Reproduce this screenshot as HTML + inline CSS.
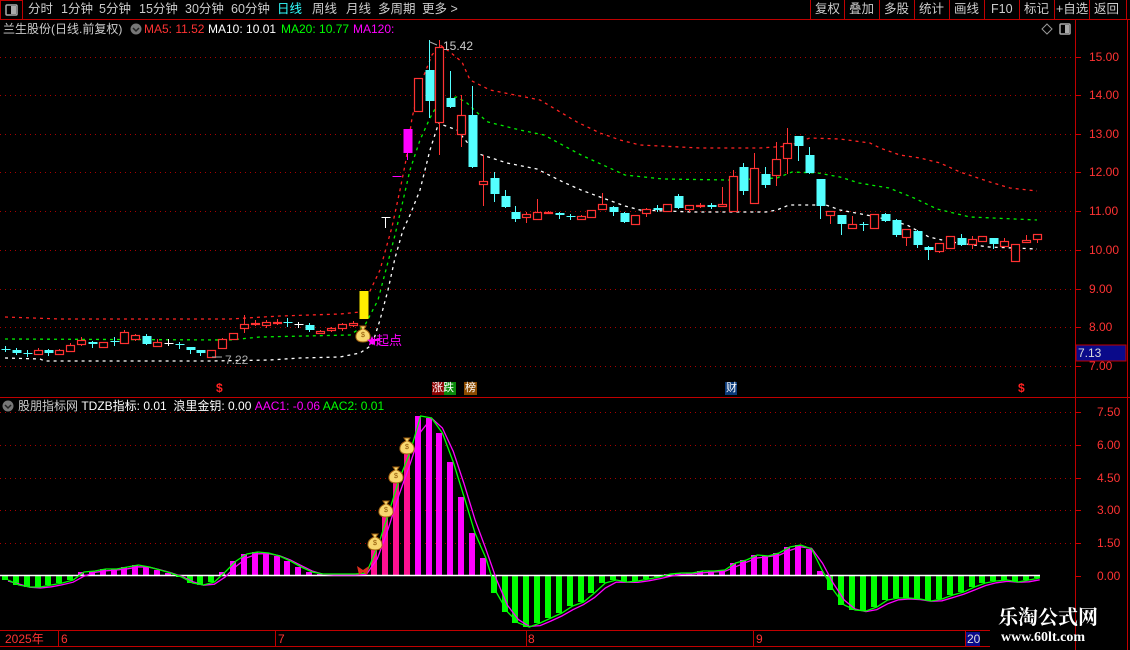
<!DOCTYPE html>
<html><head><meta charset="utf-8">
<style>
html,body{margin:0;padding:0;background:#000;width:1130px;height:650px;overflow:hidden}
body{position:relative;font-family:"Liberation Sans","Noto Sans CJK SC",sans-serif;}
.t{position:absolute;white-space:nowrap;font-size:12px;line-height:14px}
svg{position:absolute;left:0;top:0}
</style></head><body>
<svg id="s" width="1130" height="650" xmlns="http://www.w3.org/2000/svg">
<g stroke="#c00000" stroke-width="1" fill="none">
<line x1="0" y1="19.5" x2="1130" y2="19.5"/>
<line x1="0" y1="397.5" x2="1130" y2="397.5"/>
<line x1="1075.5" y1="20" x2="1075.5" y2="650"/>
<line x1="1127.5" y1="20" x2="1127.5" y2="650"/>
<line x1="0" y1="630.5" x2="990" y2="630.5"/>
<line x1="0" y1="646.5" x2="990" y2="646.5"/>
<rect x="0.5" y="0.5" width="22" height="19"/>
<line x1="810.5" y1="0" x2="810.5" y2="19"/><line x1="844.5" y1="0" x2="844.5" y2="19"/>
<line x1="879.5" y1="0" x2="879.5" y2="19"/><line x1="914.5" y1="0" x2="914.5" y2="19"/>
<line x1="949.5" y1="0" x2="949.5" y2="19"/><line x1="984.5" y1="0" x2="984.5" y2="19"/>
<line x1="1019.5" y1="0" x2="1019.5" y2="19"/><line x1="1054.5" y1="0" x2="1054.5" y2="19"/>
<line x1="1089.5" y1="0" x2="1089.5" y2="19"/><line x1="1126.5" y1="0" x2="1126.5" y2="19"/>
<line x1="58.5" y1="631" x2="58.5" y2="646"/><line x1="275.5" y1="631" x2="275.5" y2="646"/>
<line x1="526.5" y1="631" x2="526.5" y2="646"/><line x1="753.5" y1="631" x2="753.5" y2="646"/>
<line x1="965.5" y1="631" x2="965.5" y2="646"/>
</g>
<rect x="6" y="5" width="11" height="10" fill="none" stroke="#aaa" stroke-width="1.5" rx="1"/>
<rect x="11" y="6" width="5" height="8" fill="#aaa"/>
<path d="M1047 24 l5 5 -5 5 -5 -5z" fill="none" stroke="#999"/>
<rect x="1060" y="24" width="10" height="10" fill="none" stroke="#aaa" stroke-width="1.5" rx="1"/>
<rect x="1065" y="25" width="4" height="8" fill="#aaa"/>
<circle cx="136" cy="29" r="5.5" fill="#777"/><path d="M133 28 l3 3 3 -3" stroke="#222" fill="none" stroke-width="1.5"/>
<circle cx="8" cy="406" r="5.5" fill="#777"/><path d="M5 405 l3 3 3 -3" stroke="#222" fill="none" stroke-width="1.5"/>
<rect x="1076" y="345" width="50" height="16" fill="#0a0a8a" stroke="#c00000"/>
<rect x="966" y="632" width="14" height="14" fill="#0a0a8a"/>
<rect x="432" y="382" width="12" height="13" fill="#8b0000"/>
<rect x="444" y="382" width="12" height="13" fill="#0a8a0a"/>
<rect x="464" y="382" width="13" height="13" fill="#8a4a00"/>
<rect x="725" y="382" width="12" height="13" fill="#0a3a7a"/>
<g id="g"></g>
</svg>
<div class="t" style="left:0;top:2;color:#ccc;font-size:12.5px">
<span style="position:absolute;left:28px;top:2px">分时</span>
<span style="position:absolute;left:61px;top:2px">1分钟</span>
<span style="position:absolute;left:99px;top:2px">5分钟</span>
<span style="position:absolute;left:139px;top:2px">15分钟</span>
<span style="position:absolute;left:185px;top:2px">30分钟</span>
<span style="position:absolute;left:231px;top:2px">60分钟</span>
<span style="position:absolute;left:277px;top:2px;color:#3ff">日线</span>
<span style="position:absolute;left:312px;top:2px">周线</span>
<span style="position:absolute;left:346px;top:2px">月线</span>
<span style="position:absolute;left:378px;top:2px">多周期</span>
<span style="position:absolute;left:422px;top:2px">更多 &gt;</span>
<span style="position:absolute;left:815px;top:2px">复权</span>
<span style="position:absolute;left:849px;top:2px">叠加</span>
<span style="position:absolute;left:884px;top:2px">多股</span>
<span style="position:absolute;left:919px;top:2px">统计</span>
<span style="position:absolute;left:954px;top:2px">画线</span>
<span style="position:absolute;left:991px;top:2px">F10</span>
<span style="position:absolute;left:1024px;top:2px">标记</span>
<span style="position:absolute;left:1056px;top:2px">+自选</span>
<span style="position:absolute;left:1094px;top:2px">返回</span>
</div>
<div class="t" style="left:3px;top:22px;color:#ccc">兰生股份(日线.前复权)</div>
<div class="t" style="left:144px;top:22px;color:#f33">MA5: 11.52</div>
<div class="t" style="left:208px;top:22px;color:#fff">MA10: 10.01</div>
<div class="t" style="left:281px;top:22px;color:#0f0">MA20: 10.77</div>
<div class="t" style="left:353px;top:22px;color:#f0f">MA120:</div>
<div class="t" style="left:18px;top:399px;color:#ccc">股朋指标网 <span style="color:#fff">TDZB指标: 0.01 &nbsp;浪里金钥: 0.00</span> <span style="color:#f0f">AAC1: -0.06</span> <span style="color:#0f0">AAC2: 0.01</span></div>
<div class="t" style="left:443px;top:39px;color:#ccc;font-size:12px">15.42</div>
<div class="t" style="left:225px;top:353px;color:#aaa">7.22</div>
<div class="t" style="left:376px;top:334px;color:#f0f;font-size:13px">起点</div>
<div class="t" style="left:1078px;top:346px;color:#ddd">7.13</div>
<div class="t" style="left:432px;top:381px;color:#fff;font-size:11px">涨跌</div>
<div class="t" style="left:465px;top:381px;color:#fff;font-size:11px">榜</div>
<div class="t" style="left:726px;top:381px;color:#fff;font-size:11px">财</div>
<div class="t" style="left:216px;top:381px;color:#f22;font-weight:bold">$</div>
<div class="t" style="left:1018px;top:381px;color:#f22;font-weight:bold">$</div>
<div class="t" style="left:5px;top:632px;color:#f33">2025年</div>
<div class="t" style="left:61px;top:632px;color:#f33">6</div>
<div class="t" style="left:278px;top:632px;color:#f33">7</div>
<div class="t" style="left:528px;top:632px;color:#f33">8</div>
<div class="t" style="left:756px;top:632px;color:#f33">9</div>
<div class="t" style="left:967px;top:632px;color:#ddd">20</div>
<div class="t" style="left:998px;top:606px;color:#fff;font-family:'Liberation Serif','Noto Serif CJK SC',serif;font-weight:bold;font-size:20px;line-height:24px">乐淘公式网</div>
<div class="t" style="left:1001px;top:631px;color:#fff;font-family:'Liberation Serif',serif;font-weight:bold;font-size:14px">www.60lt.com</div>
<div id="ax"></div>
<script>
var g=document.getElementById('g'),h='';
function X(i){return 5+10.86*i}
// grids
var py={15:57,14:95,13:134,12:172,11:211,10:250,9:289,8:327,7:366},ax='';
for(var k in py){h+='<line x1="0" y1="'+py[k]+'.5" x2="1075" y2="'+py[k]+'.5" stroke="#a00" stroke-dasharray="1,4"/>';
h+='<line x1="1075" y1="'+py[k]+'.5" x2="1081" y2="'+py[k]+'.5" stroke="#c00"/>';
ax+='<div class="t" style="left:1089px;top:'+(py[k]-7)+'px;color:#f33">'+k+'.00</div>';}
var ly=[[412,'7.50'],[445,'6.00'],[478,'4.50'],[510,'3.00'],[543,'1.50'],[576,'0.00']];
ly.forEach(function(a){if(a[1]!='0.00')h+='<line x1="0" y1="'+a[0]+'.5" x2="1075" y2="'+a[0]+'.5" stroke="#a00" stroke-dasharray="1,4"/>';
h+='<line x1="1075" y1="'+a[0]+'.5" x2="1081" y2="'+a[0]+'.5" stroke="#c00"/>';
ax+='<div class="t" style="left:1097px;top:'+(a[0]-7)+'px;color:#f33">'+a[1]+'</div>';});
document.getElementById('ax').innerHTML=ax;
function pl(pts,c,d){return '<polyline points="'+pts.map(function(p){return p.join(',')}).join(' ')+'" fill="none" stroke="'+c+'" stroke-width="1.3" stroke-dasharray="'+d+'"/>'}
// MA lines
h+=pl([[5,317],[60,319],[230,319],[280,316],[340,314],[360,312],[380,270],[392,227],[400,190],[406,160],[412,118],[420,85],[432,55],[440,45],[450,52],[462,62],[470,80],[490,90],[540,100],[577,122],[600,133],[620,140],[640,145],[700,148],[760,148],[790,146],[800,141],[810,138],[840,139],[870,143],[880,148],[900,155],[920,158],[940,163],[960,172],[990,182],[1010,188],[1037,191]],'#f22','3,4');
h+=pl([[5,339],[230,340],[260,337],[350,335],[365,325],[378,300],[388,262],[395,235],[402,205],[410,170],[420,140],[430,118],[440,100],[457,97],[467,103],[483,118],[488,122],[520,130],[544,135],[581,155],[625,175],[663,179],[729,180],[777,178],[792,172],[818,173],[840,177],[859,183],[889,188],[914,198],[937,209],[970,217],[1037,220]],'#0e0','3,4');
h+=pl([[5,358],[40,359],[45,361],[210,361],[270,360],[300,358],[340,357],[360,353],[372,345],[380,320],[388,290],[395,258],[403,230],[410,215],[420,190],[430,150],[439,122],[443,125],[457,130],[476,153],[507,163],[537,169],[563,182],[581,190],[600,197],[625,206],[640,210],[692,212],[766,212],[777,210],[789,205],[826,205],[840,210],[877,217],[907,225],[929,237],[951,242],[989,247],[1037,249]],'#fff','3,4');
// candles: [top,bottom,hi,lo,color] c=0 red hollow,1 cyan,2 white,3 magenta
var C=[[349,350,346,352,1],[350,353,348,355,1],[353,354,350,357,1],[350,354,348,355,0],[350,353,349,356,1],[350,354,349,355,0],[345,351,343,352,0],[340,344,337,346,0],[342,344,341,348,1],[342,347,342,348,0],[341,342,337,346,1],[332,343,330,344,0],[335,339,334,341,0],[336,344,334,345,1],[342,346,339,347,0],[343,344,339,346,2],[344,345,342,349,1],[347,350,347,354,1],[350,353,350,356,1],[350,357,350,358,0],[339,348,338,349,0],[333,339,333,340,0],[324,328,315,333,0],[323,324,320,326,0],[322,325,320,328,0],[322,323,319,325,0],[322,323,318,327,1],[324,325,322,328,2],[325,330,323,332,1],[331,333,330,334,0],[328,330,327,332,0],[324,328,323,331,0],[323,325,321,327,0],
[291,319,291,319,4],[339,341,337,344,3],[217,218,217,228,2],[176,177,176,177,3],[129,153,129,160,3],[78,111,78,112,0],[70,101,40,118,1],[47,122,40,155,0],[98,107,71,108,1],[115,134,95,147,0],[115,167,86,168,1],
[181,184,155,206,0],[178,194,172,202,1],[196,207,190,208,1],[212,219,206,222,1],[214,217,212,223,0],[212,219,199,220,0],[212,213,211,214,0],[213,215,212,219,1],[216,217,214,220,1],[216,219,215,220,0],[210,217,210,218,0],[204,209,193,210,0],[207,212,206,216,1],[213,222,212,223,1],[215,224,215,225,0],[209,213,208,217,0],[208,210,205,212,1],[204,211,204,212,0],[196,208,194,209,1],[205,209,205,212,0],[205,206,203,208,0],[205,207,203,209,1],[204,206,187,207,0],[176,211,170,212,0],[167,191,163,195,1],[168,203,153,204,0],[174,185,167,188,1],[159,175,142,186,0],[143,158,128,174,0],[136,146,136,161,1],[155,173,147,174,1],[179,206,179,219,1],[211,215,211,224,0],[215,224,215,235,1],[224,228,216,229,0],[224,225,222,231,1],[214,228,214,229,0],[214,221,213,222,1],[220,235,219,237,1],[229,237,229,246,0],[231,245,230,248,1],[247,250,246,260,1],[243,251,243,253,0],[236,248,236,249,0],[238,245,234,246,1],[239,244,236,249,0],[236,241,236,242,0],[238,244,238,249,1],[241,246,238,247,0],[244,261,244,262,0],[240,242,235,243,0],[234,239,234,243,0]];
var cols=['#ff3232','#54ffff','#ffffff','#ff00ff','#ffee00'];
C.forEach(function(c,i){var x=Math.round(X(i)),col=cols[c[4]];
h+='<line x1="'+(x+.5)+'" y1="'+c[2]+'" x2="'+(x+.5)+'" y2="'+c[3]+'" stroke="'+col+'"/>';
var hgt=Math.max(1,c[1]-c[0]);
if(c[4]==0)h+='<rect x="'+(x-3.5)+'" y="'+(c[0]+.5)+'" width="8" height="'+hgt+'" fill="#000" stroke="'+col+'" stroke-width="1.2"/>';
else h+='<rect x="'+(x-3.5)+'" y="'+c[0]+'" width="9" height="'+hgt+'" fill="'+col+'"/>';});
// lower histogram
var L=[580,585,587,587,585,583,580,572,571,569,569,567,565,567,570,573,577,583,585,582,572,561,554,552,553,556,561,567,572,574,574,574,574,573,548,515,480,453,416,418,433,462,497,533,558,593,612,623,627,623,618,613,606,602,593,583,580,582,581,579,577,574,573,573,571,571,570,563,560,555,556,553,547,545,549,571,590,605,610,611,607,600,598,598,599,601,599,595,592,587,583,581,580,582,580,578];
var Z=575,gp=[],mp=[];
L.forEach(function(v,i){var x=Math.round(X(i))-3,col=v<Z?(i>=34&&i<=37?'#ff1090':'#ff00ff'):'#00ff00';
var y=Math.min(v,Z),hh=Math.abs(v-Z);if(hh<1)hh=1;
h+='<rect x="'+x+'" y="'+y+'" width="6" height="'+hh+'" fill="'+col+'"/>';
gp.push([X(i)+3,v]);});
L.forEach(function(v,i){var p=i>0?L[i-1]:v;mp.push([X(i)+3,(v*0.6+p*0.4)+1]);});
h+='<line x1="0" y1="'+Z+'.5" x2="1040" y2="'+Z+'.5" stroke="#fff" stroke-width="1.5"/>';
h+=pl(mp,'#ff00ff','none');
h+=pl(gp,'#00ff00','none');
// money bags
function bag(x,y){return '<g transform="translate('+x+','+y+')"><path d="M-3,-7 l6,0 -2,3 q7,3 6,9 q-1,4 -7,4 q-6,0 -7,-4 q-1,-6 6,-9z" fill="#f8d870" stroke="#a06010"/><text x="0" y="4" font-size="7" text-anchor="middle" fill="#8a5000" font-family="Liberation Sans">$</text></g>'}
h+=bag(363,333)+bag(375,541)+bag(386,508)+bag(396,474)+bag(407,445);
h+='<path d="M357 566 l6 4 6 -4 -2 9 -4 -3 -4 3z" fill="#e03020"/>';
h+='<path d="M372 336 l1.5 3.5 3.5 .3 -2.7 2.3 .9 3.5 -3.2 -2 -3.2 2 .9 -3.5 -2.7 -2.3 3.5 -.3z" fill="#f0f"/>';
h+='<line x1="430" y1="42" x2="437" y2="45" stroke="#aaa"/><line x1="212" y1="357" x2="222" y2="357" stroke="#aaa"/>';
g.innerHTML=h;
</script>
</body></html>
